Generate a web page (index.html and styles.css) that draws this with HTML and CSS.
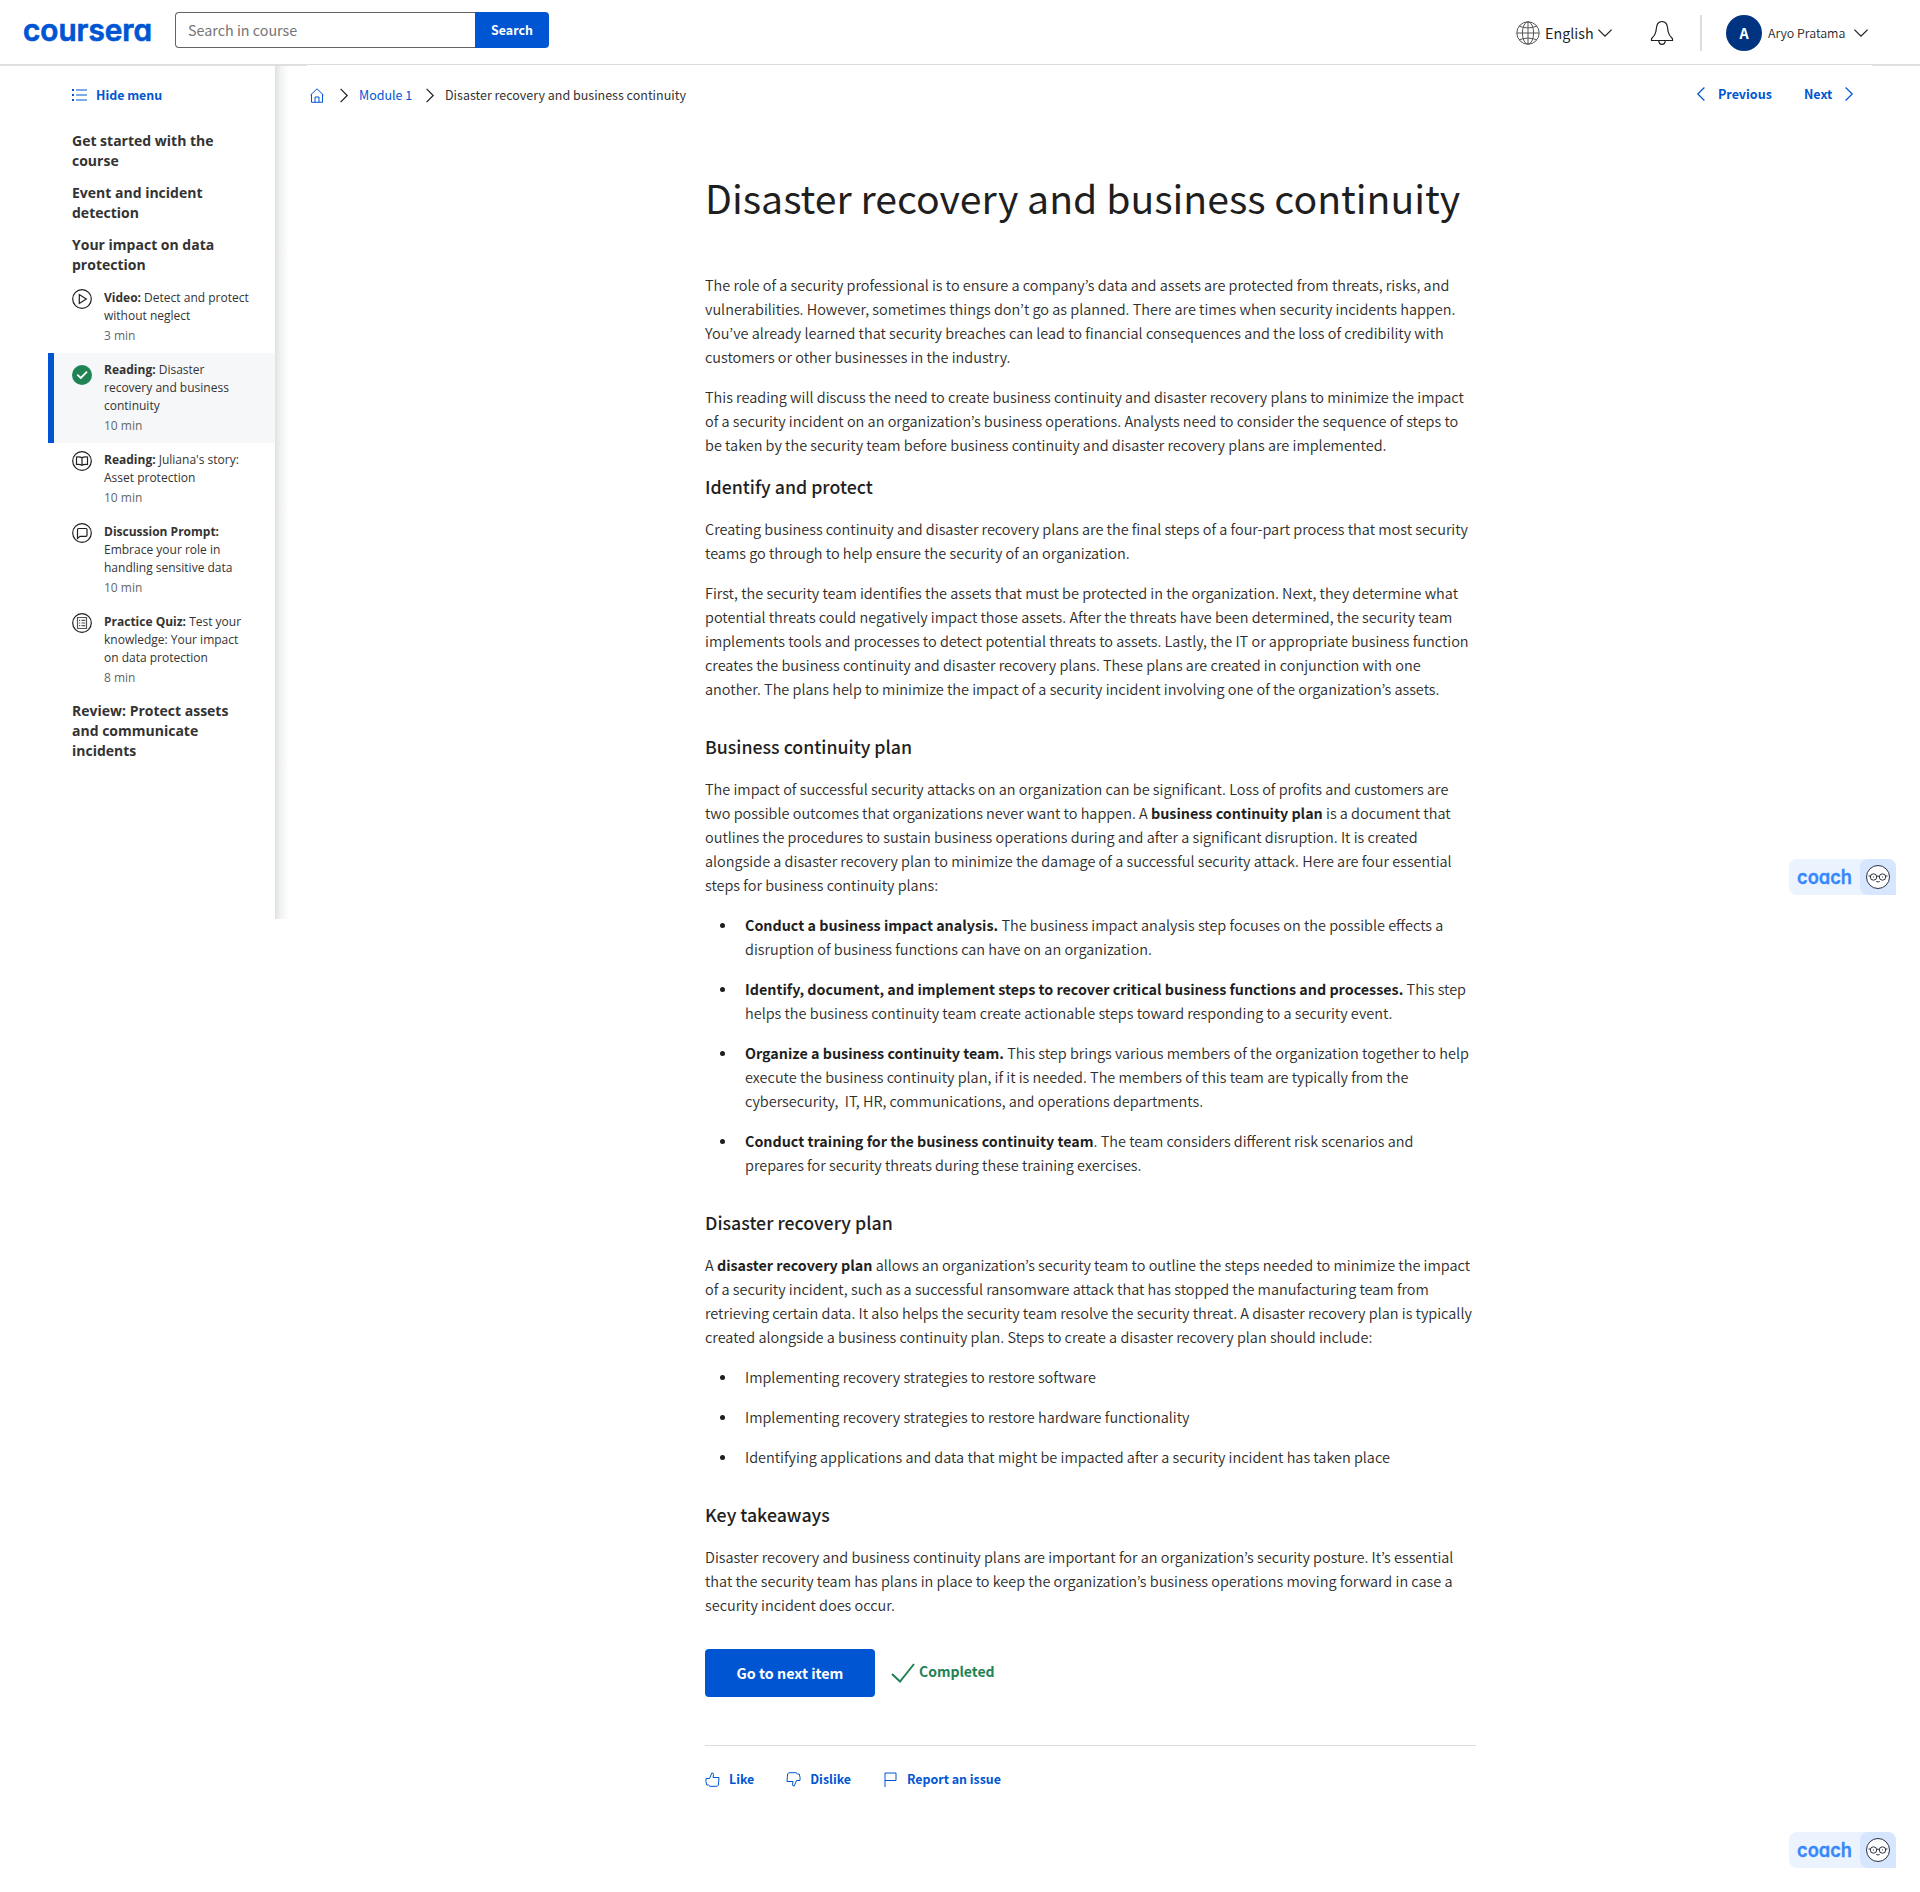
FILE: index.html
```html
<!DOCTYPE html>
<html lang="en">
<head>
<meta charset="utf-8">
<title>Disaster recovery and business continuity | Coursera</title>
<link rel="stylesheet" href="styles.css">
</head>
<body>
<header class="topbar">
  <svg class="logo" width="130" height="26" viewBox="0 0 130 26" role="img" aria-label="coursera"><text x="-1" y="21" textLength="129" lengthAdjust="spacingAndGlyphs">coursera</text></svg>
  <form class="search">
    <span class="search-input">Search in course</span>
    <span class="search-btn">Search</span>
  </form>
  <div class="account">
    <svg class="globe" width="24" height="24" viewBox="0 0 24 24"><circle cx="12" cy="12" r="11.2"/><ellipse cx="12" cy="12" rx="5.6" ry="11.2"/><path d="M12 1v22M1 12h22M3.2 5.2Q12 8.6 20.8 5.2M3.2 18.8Q12 15.4 20.8 18.8"/></svg>
    <span class="lang">English</span>
    <svg class="chev" width="14" height="8" viewBox="0 0 14 8"><path d="M.4.6 7 7.2 13.6.6"/></svg>
    <svg class="bell" width="24" height="26" viewBox="0 0 24 26"><path d="M1.5 20.5h21v-1.7c-2.400-2.200-3.900-4.300-4.400-7.300C17.500 7 17.300 1.500 12 1.500S6.500 7 5.900 11.500c-.5 3-2 5.100-4.400 7.300zM8.800 20.700c.2 4.800 6.200 4.800 6.400 0"/></svg>
    <span class="divider"></span>
    <span class="avatar">A</span>
    <span class="name">Aryo Pratama</span>
    <svg class="chev" width="14" height="8" viewBox="0 0 14 8"><path d="M.4.6 7 7.200 13.600.6"/></svg>
  </div>
</header>
<div class="layout">
  <nav class="sidebar">
    <a class="hide-menu"><svg width="15" height="12" viewBox="0 0 15 12"><path class="dots" d="M0 1h2M0 6h2M0 11h2"/><path class="bars" d="M4 1h11M4 6h11M4 11h11"/></svg>Hide menu</a>
    <h2>Get started with the<br>course</h2>
    <h2>Event and incident<br>detection</h2>
    <h2>Your impact on data<br>protection</h2>
    <div class="item">
      <svg width="20" height="20" viewBox="0 0 20 20"><circle cx="10" cy="10" r="9.300"/><path d="M7.300 5.500v9l7-4.500z"/></svg>
      <div><p><b>Video:</b> Detect and protect<br>without neglect</p><small>3 min</small></div>
    </div>
    <div class="item active">
      <svg width="20" height="20" viewBox="0 0 20 20"><circle class="done" cx="10" cy="10" r="10"/><path class="tick" d="M5.200 9.700 8.800 13l6.200-6.300"/></svg>
      <div><p><b>Reading:</b> Disaster<br>recovery and business<br>continuity</p><small>10 min</small></div>
    </div>
    <div class="item">
      <svg width="20" height="20" viewBox="0 0 20 20"><circle cx="10" cy="10" r="9.300"/><path d="M10 6.700C9 6 7 5.800 4.500 6v7.500c2.500-.2 4.500 0 5.500.9 1-.9 3-1.100 5.500-.9V6C13 5.800 11 6 10 6.700zM10 6.700v8"/></svg>
      <div><p><b>Reading:</b> Juliana's story:<br>Asset protection</p><small>10 min</small></div>
    </div>
    <div class="item">
      <svg width="20" height="20" viewBox="0 0 20 20"><circle cx="10" cy="10" r="9.300"/><path d="M5.500 15.500V6.500q0-1 1-1H14q1 0 1 1v5.800q0 1-1 1H8z"/></svg>
      <div><p><b>Discussion Prompt:</b><br>Embrace your role in<br>handling sensitive data</p><small>10 min</small></div>
    </div>
    <div class="item">
      <svg width="20" height="20" viewBox="0 0 20 20"><circle cx="10" cy="10" r="9.300"/><path class="quiz" d="M5.500 4.500h9v11h-9zM7 7.300h1.200M9.500 7.300h3.700M7 10h1.200M9.500 10h3.700M7 12.700h1.200M9.500 12.700h3.700"/></svg>
      <div><p><b>Practice Quiz:</b> Test your<br>knowledge: Your impact<br>on data protection</p><small>8 min</small></div>
    </div>
    <h2>Review: Protect assets<br>and communicate<br>incidents</h2>
  </nav>
  <main>
    <div class="crumbs">
      <svg class="home" width="14" height="15" viewBox="0 0 14 15"><path d="M.6 7 7 .8 13.400 7M1.500 6.300v8h11v-8M5 14V9h4v5"/></svg>
      <svg class="sep" width="8" height="15" viewBox="0 0 8 15"><path d="M.6.8 7.200 7.500.6 14.200"/></svg>
      <a class="module">Module 1</a>
      <svg class="sep" width="8" height="15" viewBox="0 0 8 15"><path d="M.6.8 7.200 7.500.6 14.200"/></svg>
      <span>Disaster recovery and business continuity</span>
      <div class="pager">
        <svg width="8" height="14" viewBox="0 0 8 14"><path d="M7.400.5.8 7l6.600 6.500"/></svg>
        <a>Previous</a>
        <a class="next">Next</a>
        <svg width="8" height="14" viewBox="0 0 8 14"><path d="M.6.5 7.200 7 .6 13.500"/></svg>
      </div>
    </div>
    <article>
      <h1>Disaster recovery and business continuity</h1>
      <p>The role of a security professional is to ensure a company’s data and assets are protected from threats, risks, and<br>vulnerabilities. However, sometimes things don’t go as planned. There are times when security incidents happen.<br>You’ve already learned that security breaches can lead to financial consequences and the loss of credibility with<br>customers or other businesses in the industry.</p>
      <p>This reading will discuss the need to create business continuity and disaster recovery plans to minimize the impact<br>of a security incident on an organization’s business operations. Analysts need to consider the sequence of steps to<br>be taken by the security team before business continuity and disaster recovery plans are implemented.</p>
      <h3 class="tight">Identify and protect</h3>
      <p>Creating business continuity and disaster recovery plans are the final steps of a four-part process that most security<br>teams go through to help ensure the security of an organization.</p>
      <p>First, the security team identifies the assets that must be protected in the organization. Next, they determine what<br>potential threats could negatively impact those assets. After the threats have been determined, the security team<br>implements tools and processes to detect potential threats to assets. Lastly, the IT or appropriate business function<br>creates the business continuity and disaster recovery plans. These plans are created in conjunction with one<br>another. The plans help to minimize the impact of a security incident involving one of the organization’s assets.</p>
      <h3>Business continuity plan</h3>
      <p>The impact of successful security attacks on an organization can be significant. Loss of profits and customers are<br>two possible outcomes that organizations never want to happen. A <b>business continuity plan</b> is a document that<br>outlines the procedures to sustain business operations during and after a significant disruption. It is created<br>alongside a disaster recovery plan to minimize the damage of a successful security attack. Here are four essential<br>steps for business continuity plans:</p>
      <ul>
        <li><b>Conduct a business impact analysis.</b> The business impact analysis step focuses on the possible effects a<br>disruption of business functions can have on an organization.</li>
        <li><b>Identify, document, and implement steps to recover critical business functions and processes.</b> This step<br>helps the business continuity team create actionable steps toward responding to a security event.</li>
        <li><b>Organize a business continuity team.</b> This step brings various members of the organization together to help<br>execute the business continuity plan, if it is needed. The members of this team are typically from the<br>cybersecurity,&nbsp; IT, HR, communications, and operations departments.</li>
        <li><b>Conduct training for the business continuity team</b>. The team considers different risk scenarios and<br>prepares for security threats during these training exercises.</li>
      </ul>
      <h3>Disaster recovery plan</h3>
      <p>A <b>disaster recovery plan</b> allows an organization’s security team to outline the steps needed to minimize the impact<br>of a security incident, such as a successful ransomware attack that has stopped the manufacturing team from<br>retrieving certain data. It also helps the security team resolve the security threat. A disaster recovery plan is typically<br>created alongside a business continuity plan. Steps to create a disaster recovery plan should include:</p>
      <ul>
        <li>Implementing recovery strategies to restore software</li>
        <li>Implementing recovery strategies to restore hardware functionality</li>
        <li>Identifying applications and data that might be impacted after a security incident has taken place</li>
      </ul>
      <h3>Key takeaways</h3>
      <p>Disaster recovery and business continuity plans are important for an organization’s security posture. It’s essential<br>that the security team has plans in place to keep the organization’s business operations moving forward in case a<br>security incident does occur.</p>
      <div class="complete">
        <a class="go">Go to next item</a>
        <svg width="24" height="20" viewBox="0 0 24 20"><path d="M1 11l8 7.500L23 1"/></svg>
        <span>Completed</span>
      </div>
      <div class="feedback">
        <a class="like"><svg width="15" height="15" viewBox="0 0 15 15"><path d="M1 6.500h3.500L6.800 1q2-.2 1.700 1.800L8 5.500h6l-.6 7.500-1.200 1.300H5L3.500 13H1.800Q.5 9.500 1 6.500z"/></svg>Like</a>
        <a class="dislike"><svg width="15" height="15" viewBox="0 0 15 15"><path d="M14 8.500h-3.500L8.200 14q-2 .2-1.700-1.800L7 9.500H1L1.600 2 2.800.7H10L11.500 2h1.700Q14.500 5.500 14 8.500z"/></svg>Dislike</a>
        <a class="report"><svg width="13" height="15" viewBox="0 0 13 15"><path d="M1 15V1h11v7.500H1"/></svg>Report an issue</a>
      </div>
    </article>
  </main>
</div>
<div class="coach coach-mid"><span class="coach-label"><svg width="54" height="24" viewBox="0 0 54 24"><text x="-1" y="18.500" textLength="55" lengthAdjust="spacingAndGlyphs">coach</text></svg></span><span class="face"><svg width="24" height="24" viewBox="0 0 24 24"><circle class="head" cx="12" cy="12" r="11.500"/><circle cx="7.500" cy="12" r="3.200"/><circle cx="16.500" cy="12" r="3.200"/><path d="M2.500 11h2M19.500 11h2M10.700 11.500q1.300-1 2.600 0M7 12h1M16 12h1M10.300 16.500q1.700 1 3.400 0"/></svg></span></div>
<div class="coach coach-end"><span class="coach-label"><svg width="54" height="24" viewBox="0 0 54 24"><text x="-1" y="18.500" textLength="55" lengthAdjust="spacingAndGlyphs">coach</text></svg></span><span class="face"><svg width="24" height="24" viewBox="0 0 24 24"><circle class="head" cx="12" cy="12" r="11.500"/><circle cx="7.500" cy="12" r="3.200"/><circle cx="16.500" cy="12" r="3.200"/><path d="M2.500 11h2M19.500 11h2M10.700 11.500q1.300-1 2.600 0M7 12h1M16 12h1M10.300 16.500q1.700 1 3.400 0"/></svg></span></div>
</body>
</html>
```
FILE: styles.css
```css
* { box-sizing: border-box; }
body { margin: 0; height: 1892px; position: relative; background: #fff; color: #1f1f1f; font: 14.32px/24px "Noto Sans CJK KR", sans-serif; overflow: hidden; white-space: nowrap; }
svg { fill: none; stroke: #1f1f1f; stroke-width: 1.2; flex: none; overflow: visible; }
a { color: #0056d2; }
b { font-weight: 700; }

.topbar {
  display: flex; align-items: flex-start; height: 66px; padding-left: 24px;
  background:
    linear-gradient(#dfdfdf, #dfdfdf) 0 64px / 307px 2px no-repeat,
    linear-gradient(#dfdfdf, #dfdfdf) 100% 64px / 48px 2px no-repeat,
    linear-gradient(#dcdcdc, #dcdcdc) 0 64px / 100% 1px no-repeat;
}
.logo { margin: 20px 21px 0 0; width: 130px; }
.logo text { font: 600 30.500px "Inter", sans-serif; font-feature-settings: "cv11"; fill: #0056d2; stroke: #0056d2; stroke-width: .7; }
.search { display: flex; margin-top: 12px; height: 36px; line-height: 36px; }
.search-input { width: 300px; line-height: 34px; border: 1px solid #636363; border-right: 0; border-radius: 4px 0 0 4px; padding-left: 12px; color: #757575; }
.search-btn { width: 74px; background: #0056d2; color: #fff; border-radius: 0 4px 4px 0; text-align: center; font-weight: 700; font-size: 12.400px; }
.account { display: flex; align-items: center; height: 66px; margin-left: auto; padding-right: 52px; }
.globe { stroke: #555; stroke-width: 1; margin-right: 5px; }
.lang { width: 49px; margin-right: 4px; }
.bell { width: 24px; margin: 0 26px 0 38px; }
.divider { width: 2px; height: 36px; background: #ddd; margin-right: 24px; }
.avatar { width: 36px; height: 36px; border-radius: 50%; background: #003380; color: #fff; font-weight: 700; text-align: center; line-height: 36px; margin-right: 6px; }
.name { width: 80px; font-size: 12.400px; font-weight: 350; margin-right: 6px; }

.layout { display: flex; align-items: flex-start; }
.sidebar {
  width: 289px; height: 853px; margin-right: -14px; padding: 0 14px 0 72px; font-family: "Open Sans", sans-serif;
  background: linear-gradient(to right, #e0e2e2, #f3f4f4 45%, #fff) 100% 0 / 14px 100% no-repeat;
}
.hide-menu { display: flex; align-items: center; gap: 9px; height: 24px; margin: 17px 0 18px; font: 700 12.400px/24px "Noto Sans CJK KR", sans-serif; }
.hide-menu .dots { stroke: #0056d2; stroke-width: 2; }
.hide-menu .bars { stroke: #7daae8; stroke-width: 2; }
.sidebar h2 { margin: 0; padding: 6px 0; font-size: 14px; line-height: 20px; font-weight: 700; color: #333; }
.item { display: flex; gap: 12px; margin-left: -24px; padding: 8px 0 7px 24px; font-size: 12px; line-height: 18px; color: #333; }
.item p { margin: 0 0 1px; }
.item small { display: block; font-size: 12px; line-height: 20px; color: #666; }
.item.active { background: #f5f7f9; border-left: 6px solid #0056d2; padding-left: 18px; }
.item.active svg { margin-top: 4px; }
.item .quiz { stroke: #555; }
.item .done { fill: #1f8354; stroke: none; }
.item .tick { stroke: #fff; stroke-width: 1.800; }

main { flex: 1; }
.crumbs { display: flex; align-items: center; height: 24px; margin: 17px 67px 0 35px; font-size: 12.500px; color: #333; }
.home { stroke: #0056d2; stroke-width: 1; margin-right: 16px; }
.sep { margin-right: 11px; }
.module { width: 52px; margin-right: 15px; }
.pager { display: flex; align-items: center; margin: -2px 0 0 auto; font-weight: 700; }
.pager svg { stroke: #0056d2; }
.pager a { width: 54px; margin-left: 13px; }
.pager .next { width: 28px; margin: 0 13px 0 32px; }

article { width: 771px; margin: 57px 0 0 430px; }
h1 { margin: 0 0 43px; font-size: 39.200px; line-height: 66px; font-weight: 400; }
article p { margin: 0 0 16px; }
article p, li { font-size: 14.480px; font-weight: 350; color: #2d2d2d; }
article b { font-size: 14.320px; line-height: 1; color: #1f1f1f; }
h3 { margin: 33px 0 19px; font-size: 17.750px; line-height: 24px; font-weight: 500; }
article .tight { margin-top: 17px; }
ul { margin: 0; padding-left: 40px; list-style: none; }
li { margin-bottom: 16px; }
li::before { content: ""; float: left; width: 5px; height: 5px; margin: 10px 0 0 -25px; border-radius: 50%; background: #1f1f1f; }
.complete { display: flex; align-items: center; margin-top: 32px; color: #1f8354; font-weight: 700; }
.complete svg { stroke: #1f8354; stroke-width: 2; margin: 0 4px 0 16px; }
.complete span { font-size: 14px; margin-top: -4px; }
.go { width: 170px; height: 48px; line-height: 48px; background: #0056d2; color: #fff; border-radius: 4px; text-align: center; }
.feedback { display: flex; margin-top: 48px; border-top: 1px solid #ddd; padding-top: 21px; font-size: 12.400px; font-weight: 700; }
.feedback a { display: flex; align-items: center; gap: 9px; margin-right: 32px; }
.feedback .report { margin-left: 1px; gap: 10px; }
.feedback svg { stroke: #0056d2; stroke-width: 1; }

.coach { position: absolute; right: 24px; display: flex; width: 107px; height: 36px; background: #ebf3ff; border-radius: 8px 8px 0 8px; }
.coach-mid { top: 859px; }
.coach-end { top: 1832px; }
.coach-label { width: 71px; padding: 6px 0 0 9px; }
.coach text { font: 600 19.500px "Inter", sans-serif; font-feature-settings: "cv11"; fill: #3587fc; stroke: #3587fc; stroke-width: .3; }
.face { width: 36px; height: 36px; background: #d6e6ff; border-radius: 8px 8px 0 8px; padding: 6px; }
.face svg { display: block; stroke: #2b3040; stroke-width: 1; }
.face .head { fill: #fff; }
```
